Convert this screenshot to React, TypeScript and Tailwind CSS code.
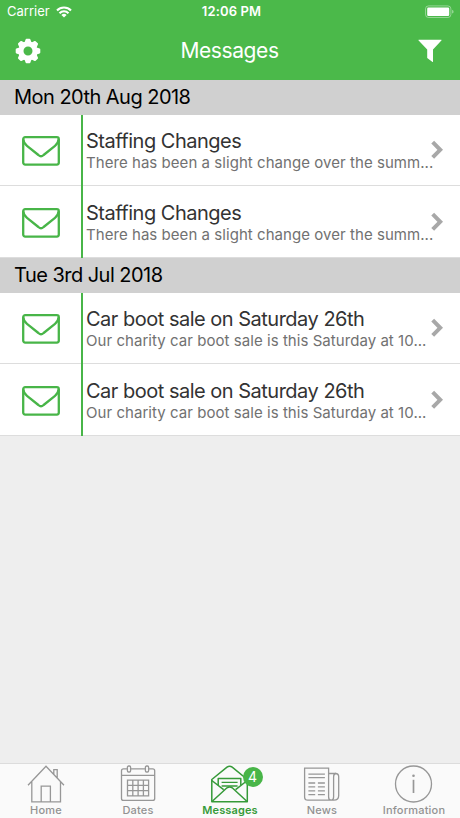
import { ReactNode } from "react";

interface Message {
	id: number;
	title: string;
	preview: string;
}

interface Group {
	date: string;
	messages: Message[];
}

const groups: Group[] = [
	{
		date: "Mon 20th Aug 2018",
		messages: [
			{ id: 1, title: "Staffing Changes", preview: "There has been a slight change over the summ..." },
			{ id: 2, title: "Staffing Changes", preview: "There has been a slight change over the summ..." },
		],
	},
	{
		date: "Tue 3rd Jul 2018",
		messages: [
			{ id: 3, title: "Car boot sale on Saturday 26th", preview: "Our charity car boot sale is this Saturday at 10..." },
			{ id: 4, title: "Car boot sale on Saturday 26th", preview: "Our charity car boot sale is this Saturday at 10..." },
		],
	},
];

const WifiIcon = () => (
	<svg width="16" height="12" viewBox="0 0 16 12" fill="none" stroke="white" strokeWidth="2.1">
		<path d="M1 4.4a10 10 0 0 1 14 0" />
		<path d="M3.5 7.2a6.3 6.3 0 0 1 9 0" />
		<path d="M8 11.6 5.4 9a3.7 3.7 0 0 1 5.2 0z" fill="white" stroke="none" />
	</svg>
);

const BatteryIcon = () => (
	<svg width="29" height="14" viewBox="0 0 29 14">
		<rect x="0.5" y="0.9" width="25.4" height="11.6" rx="3" fill="none" stroke="white" strokeOpacity="0.4" />
		<rect x="2.2" y="2.5" width="22" height="8.4" rx="1.2" fill="white" />
		<path d="M27.2 4.8v3.8q1.3-.6 1.3-1.9T27.2 4.8z" fill="white" fillOpacity="0.5" />
	</svg>
);

const GearIcon = () => (
	<svg width="26" height="26" viewBox="-13 -13 26 26">
		<circle r="7.1" fill="none" stroke="white" strokeWidth="5.2" />
		{[0, 45, 90, 135, 180, 225, 270, 315].map((angle) => (
			<path key={angle} d="M-3.5-8.6-2.4-11.6Q-2.2-12.3-1.5-12.3H1.5Q2.2-12.3 2.4-11.6L3.5-8.6z" fill="white" transform={`rotate(${angle})`} />
		))}
	</svg>
);

const FunnelIcon = () => (
	<svg width="24" height="24" viewBox="0 0 24 24" fill="white">
		<path d="M.8.8H23.2Q24 .8 23.4 1.5L15 10.4V22.4Q15 23.4 14.2 22.7L9.2 19V10.4L.6 1.5Q0 .8.8.8z" />
	</svg>
);

const EnvelopeIcon = () => (
	<svg width="38" height="30" viewBox="0 0 38 30" fill="none" stroke="#48b548" strokeWidth="2.3" strokeLinejoin="round">
		<rect x="1.2" y="1.2" width="35.6" height="27.4" rx="2" />
		<path d="M1.3 3.2Q1.5 7 5 9.8L16.4 19Q19 21.4 21.6 19L33 9.8Q36.4 7 36.6 3.2" />
	</svg>
);

const ChevronIcon = () => (
	<svg width="13" height="20" viewBox="0 0 13 20" fill="none" stroke="#a8a8a8" strokeWidth="4">
		<path d="M1.7 2.2 9.2 9.8 1.7 17.4" />
	</svg>
);

const HomeIcon = () => (
	<svg width="40" height="40" viewBox="0 0 40 40" fill="none" stroke="#979797" strokeWidth="1.3">
		<path d="M2 21.2 20 2.3 38 21.2M5.8 17.5V37.8H34.5V17.5M15.2 37.8V22.2H24.4V37.8M27.8 10V5.6H31.2V13.8" />
	</svg>
);

const DatesIcon = () => (
	<svg width="40" height="40" viewBox="0 0 40 40" fill="none" stroke="#979797" strokeWidth="1.3">
		<path d="M9.2 4.8H5.5Q3.5 4.8 3.5 6.8V34.4Q3.5 36.4 5.5 36.4H34.7Q36.7 36.4 36.7 34.4V6.8Q36.7 4.8 34.7 4.8H30.8M27.2 4.8H12.8M3.5 11.3H36.7" />
		<rect x="9.4" y="2" width="3.2" height="6" rx="1.2" />
		<rect x="27.4" y="2" width="3.2" height="6" rx="1.2" />
		<path d="M9.5 16.2H30.6V31.8H9.5zM9.5 21.4H30.6M9.5 26.6H30.6M14.8 16.2V31.8M20.1 16.2V31.8M25.4 16.2V31.8" />
	</svg>
);

const MessagesIcon = () => (
	<svg width="40" height="40" viewBox="0 0 40 40" fill="none" stroke="#369a39" strokeWidth="1.5" strokeLinejoin="round">
		<path d="M1.8 15.5 17 3.1Q19.6 1.2 22.2 3.1L37.3 15.5V37.8H1.8z" />
		<path d="M1.8 16.5 13.6 25.6M37.3 16.5 25.6 25.6M2.3 37.3 17 23.8Q19.6 22 22.2 23.8L36.8 37.3" />
		<path d="M8.2 21V14.6H30.8V21" />
		<path d="M11.6 18.4H27.6M11.6 22H27.6" strokeWidth="1.3" />
	</svg>
);

const NewsIcon = () => (
	<svg width="40" height="40" viewBox="0 0 40 40" fill="none" stroke="#979797" strokeWidth="1.3">
		<path d="M26.6 33V4.2H2.6V33Q2.6 36.2 5.9 36.2H31.9Q36.7 36.2 36.7 31.5V12.8Q36.7 9.5 33.5 9.5H26.6M26.6 33Q26.6 36.2 29.4 36.2 31.6 36 31.6 33V12.8Q31.6 9.5 34 9.5" />
		<path d="M6.4 10.2H22.9M6.4 13.7H22.9M6.4 19H13.2M6.4 22.9H13.2M6.4 26.8H13.2M6.4 30.7H13.2M15.9 19H22.9M15.9 22.9H22.9M15.9 26.8H22.9M15.9 30.7H22.9" />
	</svg>
);

const InfoIcon = () => (
	<svg width="40" height="40" viewBox="0 0 40 40" fill="none" stroke="#979797" strokeWidth="1.3">
		<circle cx="19.5" cy="20" r="18" />
		<path d="M19.5 15.8V29" strokeWidth="1.7" />
		<circle cx="19.5" cy="11.8" r="1.3" fill="#979797" stroke="none" />
	</svg>
);

interface TabProps {
	label: string;
	icon: ReactNode;
	active?: boolean;
	badge?: number;
}

const Tab = ({ label, icon, active, badge }: TabProps) => (
	<button className="flex flex-1 flex-col items-center">
		<span className="relative block h-[39px] w-10">
			{icon}
			{badge && (
				<span className="absolute top-[2.5px] left-[32.5px] flex h-5 w-5 items-center justify-center rounded-full bg-[#48b548] text-[14px] text-white">
					{badge}
				</span>
			)}
		</span>
		<span className={`text-[11px] leading-[14px] ${active ? "tracking-[0.1px] font-semibold text-[#369a39]" : "tracking-[0.2px] font-medium text-[#929292]"}`}>
			{label}
		</span>
	</button>
);

export default function App() {
	return (
		<div className="flex h-[818px] w-[460px] flex-col overflow-hidden bg-[#eeeeee] font-['Inter','Liberation_Sans',sans-serif]">
			<header className="h-20 shrink-0 bg-[#4bb94a] text-white">
				<div className="grid h-6 grid-cols-3 items-center pr-1.5 pl-[7px] text-[13px]">
					<div className="flex items-center gap-1.5">
						<span>Carrier</span>
						<WifiIcon />
					</div>
					<span className="pl-0.5 text-center font-semibold tracking-[0.15px]">12:06 PM</span>
					<div className="flex justify-end">
						<BatteryIcon />
					</div>
				</div>
				<div className="flex h-[54px] items-center justify-between pr-[18px] pl-[15px]">
					<GearIcon />
					<h1 className="text-[21px] tracking-[-0.4px]">Messages</h1>
					<FunnelIcon />
				</div>
			</header>

			<main className="flex-1">
				{groups.map((group) => (
					<section key={group.date}>
						<h2 className="flex h-[34.5px] items-center bg-[#d0d0d0] pl-3.5 text-[20px] tracking-[-0.53px] text-black">
							{group.date}
						</h2>
						{group.messages.map((message) => (
							<div key={message.id} className="flex h-[71.75px] border-b border-[#dddddd] bg-white">
								<div className="-mb-px flex w-[83px] items-center justify-center border-r-2 border-[#48b548] pt-[2px]">
									<EnvelopeIcon />
								</div>
								<div className="flex flex-1 items-center pr-4 pl-[3px]">
									<div className="w-[344.5px] shrink-0 pt-[2px] whitespace-nowrap">
										<p className="text-[20px] leading-6 tracking-[-0.5px] text-[#333333]">{message.title}</p>
										<p className="text-[15px] leading-5 tracking-[0.05px] text-[#717171]">{message.preview}</p>
									</div>
									<ChevronIcon />
								</div>
							</div>
						))}
					</section>
				))}
			</main>

			<nav className="flex h-[55px] shrink-0 border-t border-[#dcdcdc] bg-[#fafafa]">
				<Tab label="Home" icon={<HomeIcon />} />
				<Tab label="Dates" icon={<DatesIcon />} />
				<Tab label="Messages" icon={<MessagesIcon />} active badge={4} />
				<Tab label="News" icon={<NewsIcon />} />
				<Tab label="Information" icon={<InfoIcon />} />
			</nav>
		</div>
	);
}
